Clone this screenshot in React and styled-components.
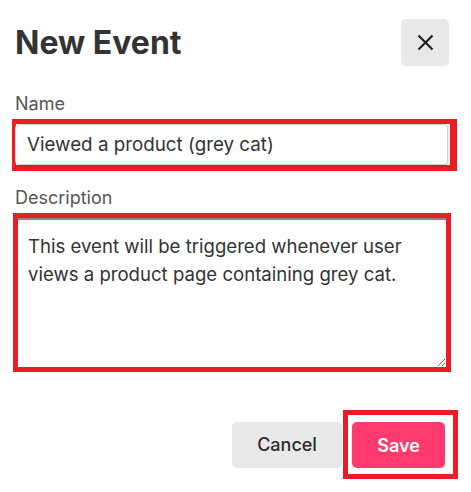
import React from "react";
import styled, { createGlobalStyle } from "styled-components";

const GlobalStyle = createGlobalStyle`
  body {
    margin: 0;
    background: #ffffff;
    font-family: Inter, "Liberation Sans", sans-serif;
  }
`;

const Dialog = styled.div`
  width: 434px;
  padding: 19px 22px 0 15px;
`;

const Header = styled.div`
  display: flex;
  justify-content: space-between;
  align-items: center;
`;

const Title = styled.h1`
  margin: 0;
  font-size: 32px;
  font-weight: 700;
  color: #333333;
`;

const CloseButton = styled.button`
  width: 48px;
  height: 47px;
  display: flex;
  align-items: center;
  justify-content: center;
  border: none;
  border-radius: 5px;
  background: #e8e8e8;
  color: #222;
  cursor: pointer;
  padding: 0;
`;

const Label = styled.label`
  display: block;
  font-size: 18px;
  color: #555555;
  line-height: 20px;
  margin: ${(p) => p.$top}px 0 5px;
`;

// red annotation frames drawn round the fields in the screenshot
const Highlight = styled.div`
  border-style: solid;
  border-color: #ec1c24;
  border-width: ${(p) => p.$border};
  margin: ${(p) => p.$margin};
  padding: ${(p) => p.$pad || "0"};
  display: ${(p) => (p.$inline ? "inline-flex" : "block")};
`;

const Input = styled.input`
  box-sizing: border-box;
  display: block;
  width: 433px;
  height: 41px;
  margin: 0 0 0 -1px;
  padding: 0 11px;
  border: 1px solid #cfcfcf;
  border-radius: 4px;
  box-shadow: 1px 1px 2px rgba(0, 0, 0, 0.12);
  font-family: inherit;
  font-size: 18.8px;
  color: #333;
  outline: none;
`;

const TextArea = styled.textarea`
  box-sizing: border-box;
  display: block;
  width: 428px;
  height: 149px;
  padding: 12px 10px;
  border: none;
  border-top: 2px solid #888;
  font-family: inherit;
  font-size: 18.6px;
  line-height: 28px;
  color: #333;
  outline: none;
`;

const Footer = styled.div`
  display: flex;
  justify-content: flex-end;
  align-items: center;
  gap: 1px;
  margin: 38px -9px 0 0;
`;

const Button = styled.button`
  height: 46px;
  width: ${(p) => p.$width}px;
  border: none;
  border-radius: 5px;
  background: ${(p) => (p.$primary ? "#ff3a6f" : "#e8e8e8")};
  color: ${(p) => (p.$primary ? "#ffffff" : "#2b2b2b")};
  font-family: inherit;
  font-size: 18px;
  font-weight: ${(p) => (p.$primary ? 600 : 500)};
  cursor: pointer;
`;

export default function App() {
  return (
    <>
      <GlobalStyle />
      <Dialog>
        <Header>
          <Title>New Event</Title>
          <CloseButton aria-label="Close">
            <svg width="17" height="17" viewBox="0 0 17 17" fill="none">
              <path d="M1.5 1.5L15.5 15.5M15.5 1.5L1.5 15.5" stroke="currentColor" strokeWidth="2.2" />
            </svg>
          </CloseButton>
        </Header>

        <Label $top={28}>Name</Label>
        <Highlight $border="5px 7px 6px 4px" $margin="0 -8px 0 -3px">
          <Input defaultValue="Viewed a product (grey cat)" />
        </Highlight>

        <Label $top={17}>Description</Label>
        <Highlight $border="5px" $margin="0 -2px 0 -2px">
          <TextArea defaultValue="This event will be triggered whenever user views a product page containing grey cat." />
        </Highlight>

        <Footer>
          <Button $width={110}>Cancel</Button>
          <Highlight $border="5px" $margin="0" $pad="7px 8px 6px 4px" $inline>
            <Button $width={93} $primary>
              Save
            </Button>
          </Highlight>
        </Footer>
      </Dialog>
    </>
  );
}
